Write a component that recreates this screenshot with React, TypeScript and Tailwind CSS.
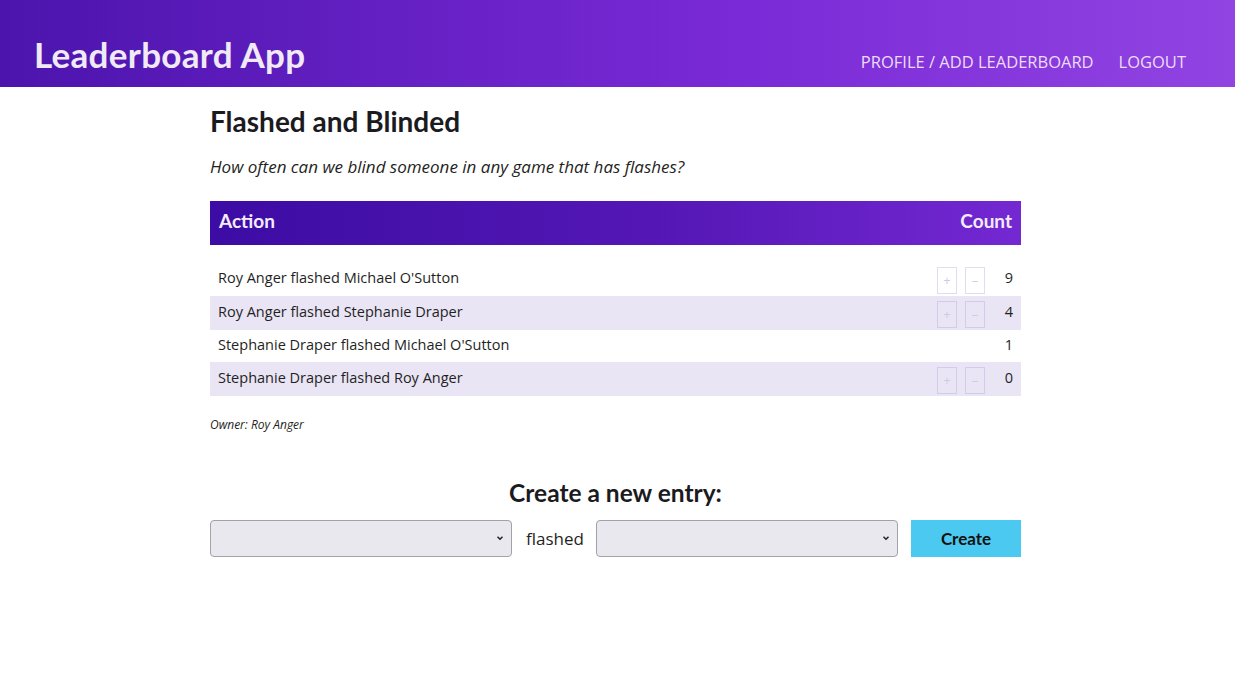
import React from 'react';

const ROWS = [
    { text: "Roy Anger flashed Michael O'Sutton", count: 9, buttons: true, striped: false },
    { text: 'Roy Anger flashed Stephanie Draper', count: 4, buttons: true, striped: true },
    { text: "Stephanie Draper flashed Michael O'Sutton", count: 1, buttons: false, striped: false },
    { text: 'Stephanie Draper flashed Roy Anger', count: 0, buttons: true, striped: true },
];

const heading = { fontFamily: 'Lato, "Open Sans", sans-serif' };

const Chevron = () => (
    <svg width="10" height="10" viewBox="0 0 10 10" className="absolute right-[6px] top-1/2 -translate-y-1/2">
        <path d="M2.5 3.8 L5 6.3 L7.5 3.8" fill="none" stroke="#222" strokeWidth="1.5" />
    </svg>
);

const Select = () => (
    <div className="relative w-[302px] h-[37px] rounded-[4px] border border-[#a3a2ab] bg-[#e9e8ee]">
        <Chevron />
    </div>
);

export default function App() {
    return (
        <div className="min-h-[682px] bg-white text-[#1f1f24]" style={{ fontFamily: '"Open Sans", sans-serif' }}>
            {/* header */}
            <header className="h-[87px] flex items-center justify-between pl-[34px] pr-[49px] bg-[linear-gradient(90deg,#4c14ad_0%,#7a2ad6_60%,#9144e2_100%)]">
                <h1 className="text-[35px] font-bold text-[#efeaf6] tracking-[0.3px] pt-[22px]" style={heading}>Leaderboard App</h1>
                <nav className="flex gap-[25px] pt-[37px] text-[16.5px] text-[#ecdcfa]">
                    <span>PROFILE / ADD LEADERBOARD</span>
                    <span>LOGOUT</span>
                </nav>
            </header>

            <main className="w-[815px] mx-auto">
                <div className="w-[811px]">
                    <h2 className="mt-[18px] text-[28px] font-bold leading-[32px] text-[#1b1b1f]" style={heading}>Flashed and Blinded</h2>
                    <p className="mt-[18px] text-[17px] italic leading-[24px] text-[#1f1f24]">How often can we blind someone in any game that has flashes?</p>

                    <div className="mt-[22px] h-[44px] flex items-center justify-between px-[9px] bg-[linear-gradient(90deg,#3c0ca4_0%,#5417b5_55%,#7428d2_100%)] text-[19px] font-bold text-[#f3ecfb]" style={heading}>
                        <span className="-mt-[4px]">Action</span>
                        <span className="-mt-[4px]">Count</span>
                    </div>

                    <div className="mt-[17px] text-[14.5px]">
                        {ROWS.map((r) => (
                            <div
                                key={r.text}
                                className={`flex items-center pl-[8px] pr-[8px] ${r.buttons ? 'h-[34px]' : 'h-[32px]'} ${r.striped ? 'bg-[#e9e5f5]' : 'bg-white'}`}
                            >
                                <span className="flex-1 -mt-[2px]">{r.text}</span>
                                {r.buttons && (
                                    <div className="flex gap-[8px] mr-[18px] mt-[3px]">
                                        <span className={`w-[20px] h-[27px] flex items-center justify-center border ${r.striped ? 'border-[#d4cbeb]' : 'border-[#e2dcf0]'} text-[13px] text-[#d2cae4]`}>+</span>
                                        <span className={`w-[20px] h-[27px] flex items-center justify-center border ${r.striped ? 'border-[#d4cbeb]' : 'border-[#e2dcf0]'} text-[13px] text-[#d2cae4]`}>–</span>
                                    </div>
                                )}
                                <span className="w-[10px] text-right -mt-[2px]">{r.count}</span>
                            </div>
                        ))}
                    </div>

                    <p className="mt-[20px] text-[12px] italic text-[#1f1f24]">Owner: Roy Anger</p>

                    <h3 className="mt-[41px] text-center text-[24.5px] font-bold text-[#1b1b1f]" style={heading}>Create a new entry:</h3>

                    <div className="mt-[8px] flex items-center">
                        <Select />
                        <span className="ml-[14px] mr-[12px] text-[17px] text-[#1f1f24]">flashed</span>
                        <Select />
                        <button className="ml-auto w-[110px] h-[37px] bg-[#4cc9f0] text-[17px] font-bold text-[#111]" style={heading}>Create</button>
                    </div>
                </div>
            </main>
        </div>
    );
}
